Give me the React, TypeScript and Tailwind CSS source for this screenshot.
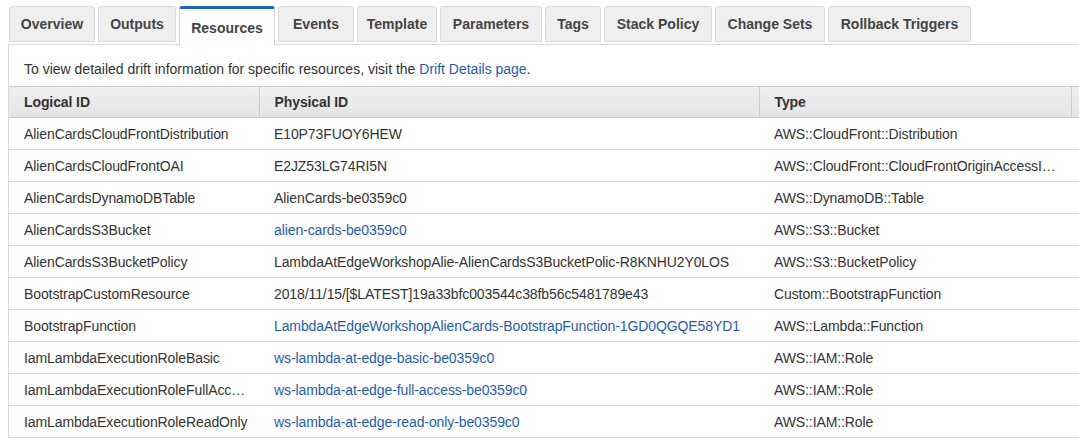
const tabs = [
  { label: "Overview", w: "w-[86px]" },
  { label: "Outputs", w: "w-[78px]" },
  { label: "Resources", w: "w-[96px]", active: true },
  { label: "Events", w: "w-[76px]" },
  { label: "Template", w: "w-[80px]" },
  { label: "Parameters", w: "w-[102px]" },
  { label: "Tags", w: "w-[56px]" },
  { label: "Stack Policy", w: "w-[108px]" },
  { label: "Change Sets", w: "w-[110px]" },
  { label: "Rollback Triggers", w: "w-[143px]" },
]

type Row = { logical: string; physical: string; link?: boolean; type: string }

const rows: Row[] = [
  { logical: "AlienCardsCloudFrontDistribution", physical: "E10P73FUOY6HEW", type: "AWS::CloudFront::Distribution" },
  { logical: "AlienCardsCloudFrontOAI", physical: "E2JZ53LG74RI5N", type: "AWS::CloudFront::CloudFrontOriginAccessIdentity" },
  { logical: "AlienCardsDynamoDBTable", physical: "AlienCards-be0359c0", type: "AWS::DynamoDB::Table" },
  { logical: "AlienCardsS3Bucket", physical: "alien-cards-be0359c0", link: true, type: "AWS::S3::Bucket" },
  { logical: "AlienCardsS3BucketPolicy", physical: "LambdaAtEdgeWorkshopAlie-AlienCardsS3BucketPolic-R8KNHU2Y0LOS", type: "AWS::S3::BucketPolicy" },
  { logical: "BootstrapCustomResource", physical: "2018/11/15/[$LATEST]19a33bfc003544c38fb56c5481789e43", type: "Custom::BootstrapFunction" },
  { logical: "BootstrapFunction", physical: "LambdaAtEdgeWorkshopAlienCards-BootstrapFunction-1GD0QGQE58YD1", link: true, type: "AWS::Lambda::Function" },
  { logical: "IamLambdaExecutionRoleBasic", physical: "ws-lambda-at-edge-basic-be0359c0", link: true, type: "AWS::IAM::Role" },
  { logical: "IamLambdaExecutionRoleFullAccess", physical: "ws-lambda-at-edge-full-access-be0359c0", link: true, type: "AWS::IAM::Role" },
  { logical: "IamLambdaExecutionRoleReadOnly", physical: "ws-lambda-at-edge-read-only-be0359c0", link: true, type: "AWS::IAM::Role" },
]

export default function App() {
  return (
    <div className="h-[444px] w-[1079px] overflow-hidden bg-white font-['Liberation_Sans',Arial,sans-serif] text-[14px] text-[#333]">
      <div className="w-[1200px] pl-[9px] pt-[6px]">
        {/* tabs */}
        <div className="flex gap-[3px] items-end">
          {tabs.map((t) =>
            t.active ? (
              <div
                key={t.label}
                className={`${t.w} h-[39px] -mb-px relative z-10 flex items-center justify-center rounded-t-[3px] border border-[#d5d5d5] border-b-0 border-t-[3px] border-t-[#1a66c0] bg-white pt-[3px] font-bold text-[#444]`}
              >
                {t.label}
              </div>
            ) : (
              <div
                key={t.label}
                className={`${t.w} h-[36px] mb-[2px] flex items-center justify-center rounded-t-[3px] border border-[#dadada] bg-[#efefef] pt-px font-bold text-[#444]`}
              >
                {t.label}
              </div>
            )
          )}
        </div>

        {/* panel */}
        <div className="-ml-px border-l border-t border-[#d9d9d9]">
          <p className="px-[15px] pt-[15px] pb-[8px] leading-[18px] text-[#333]">
            To view detailed drift information for specific resources, visit the{" "}
            <a className="text-[#1f5bb5]">Drift Details page</a>.
          </p>
          <table className="table-fixed border-collapse w-[1190px] tracking-[-0.1px]">
            <colgroup>
              <col className="w-[250px]" />
              <col className="w-[500px]" />
              <col className="w-[312px]" />
              <col />
            </colgroup>
            <thead>
              <tr className="h-[31px] bg-gradient-to-b from-[#efefef] to-[#e4e4e4]">
                {["Logical ID", "Physical ID", "Type", ""].map((h, i) => (
                  <th
                    key={i}
                    className={`border-y border-[#cbcbcb] ${i > 0 ? "border-l" : ""} px-[15px] text-left font-bold text-[#333]`}
                  >
                    {h}
                  </th>
                ))}
              </tr>
            </thead>
            <tbody>
              {rows.map((r) => (
                <tr key={r.logical} className="h-[32px] border-b border-[#dcdcdc]">
                  <td className="truncate pl-[15px] pr-[7px] pt-px">{r.logical}</td>
                  <td className={`truncate pl-[15px] pr-[6px] pt-px ${r.link ? "text-[#1f5bb5]" : ""}`}>{r.physical}</td>
                  <td className="truncate pl-[15px] pr-[9px] pt-px">{r.type}</td>
                  <td></td>
                </tr>
              ))}
            </tbody>
          </table>
        </div>
      </div>
    </div>
  )
}
